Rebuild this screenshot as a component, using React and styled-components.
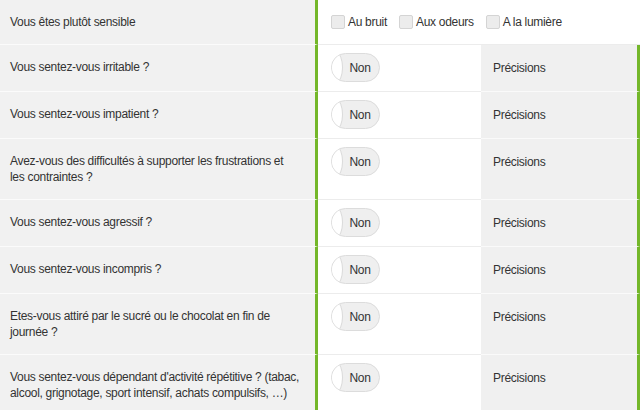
import React from 'react';
import styled, { createGlobalStyle } from 'styled-components';

const GlobalStyle = createGlobalStyle`
  body {
    margin: 0;
    background: #fff;
    font-family: "Liberation Sans", Arial, sans-serif;
    font-size: 12px;
    letter-spacing: -0.3px;
    color: #333;
  }
`;

const green = '#74b72a';

const Table = styled.div`
  width: 640px;
  height: 410px;
  overflow: hidden;
`;

const Row = styled.div`
  display: grid;
  grid-template-columns: 318px 163px 159px;
`;

const Question = styled.div`
  background: #f1f1f1;
  border-right: 3px solid ${green};
  border-bottom: 1px solid #fbfbfb;
  padding: 14px 6px 14px 10px;
  line-height: 16px;
`;

const ToggleCell = styled.div`
  background: #fff;
  border-bottom: 1px solid #ececec;
  padding: 8px 13px;
  grid-column: ${(p) => (p.$wide ? 'span 2' : 'auto')};
  display: flex;
  align-items: ${(p) => (p.$wide ? 'center' : 'flex-start')};
`;

const Precision = styled.div`
  background: #f0f0f0;
  border-right: 3px solid ${green};
  border-bottom: 1px solid #fafafa;
  padding: 15px 12px;
  line-height: 16px;
`;

const Checks = styled.div`
  display: flex;
  align-items: center;
  gap: 12px;
`;

const Check = styled.label`
  display: flex;
  align-items: center;
  gap: 3px;
  line-height: 16px;
`;

const Box = styled.span`
  width: 12px;
  height: 12px;
  border: 1px solid #d4d4d4;
  border-radius: 2px;
  background: #ececec;
`;

const Toggle = styled.div`
  position: relative;
  width: 49px;
  height: 29px;
  box-sizing: border-box;
  border: 1px solid #dcdcdc;
  border-radius: 15px;
  background: #efefef;
  display: flex;
  align-items: center;
  justify-content: center;
  padding-left: 9px;
  overflow: hidden;
`;

const Knob = styled.span`
  position: absolute;
  left: -2px;
  top: -1px;
  width: 12px;
  height: 29px;
  border-radius: 50%;
  background: #fff;
  box-shadow: 1px 0 0 #dadada;
`;

const Label = styled.span`
  line-height: 16px;
`;

const questions = [
  'Vous sentez-vous irritable ?',
  'Vous sentez-vous impatient ?',
  'Avez-vous des difficultés à supporter les frustrations et les\u00a0contraintes ?',
  'Vous sentez-vous agressif ?',
  'Vous sentez-vous incompris ?',
  'Etes-vous attiré par le sucré ou le chocolat en fin de journée ?',
  "Vous sentez-vous dépendant d'activité répétitive ? (tabac, alcool, grignotage, sport intensif, achats compulsifs, …)",
];

const App = () => (
  <>
    <GlobalStyle />
    <Table>
      <Row>
        <Question>Vous êtes plutôt sensible</Question>
        <ToggleCell $wide>
          <Checks>
            {['Au bruit', 'Aux odeurs', 'A la lumière'].map((c) => (
              <Check key={c}>
                <Box />
                {c}
              </Check>
            ))}
          </Checks>
        </ToggleCell>
      </Row>
      {questions.map((q) => (
        <Row key={q}>
          <Question>{q}</Question>
          <ToggleCell>
            <Toggle>
              <Knob />
              <Label>Non</Label>
            </Toggle>
          </ToggleCell>
          <Precision>Précisions</Precision>
        </Row>
      ))}
    </Table>
  </>
);

export default App;
